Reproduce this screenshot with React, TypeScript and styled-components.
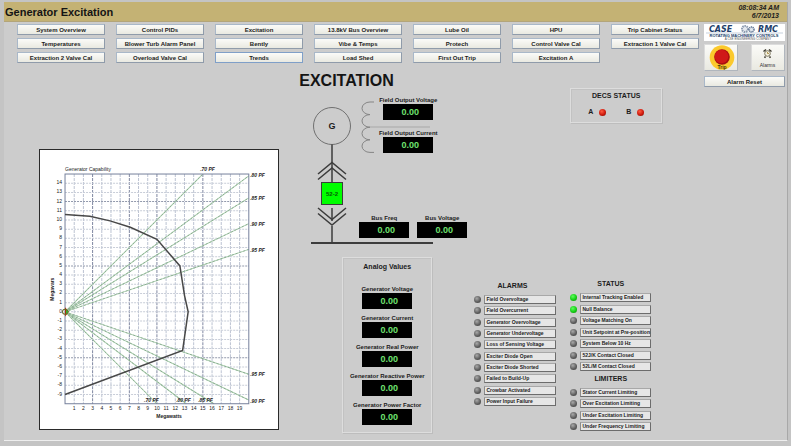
import React from "react";
import styled, { createGlobalStyle } from "styled-components";

const GlobalStyle = createGlobalStyle`
  *, *::before, *::after { box-sizing: border-box; }
  body {
    margin: 0;
    background: #cccccc;
    color: #1c1c1c;
    font-family: "Liberation Sans", Arial, sans-serif;
  }
  button { font-family: inherit; color: inherit; }
  h1, h2, h3, p, ul, dl, dd, output { margin: 0; padding: 0; }
`;

const Screen = styled.div`
  min-height: 100vh;
  padding: 2px 3px 4px 4px;
  background: #c4c4c4;
`;

const Frame = styled.div`
  background: #cccccc;
  border-right: 1px solid #a8a8a8;
  border-bottom: 1px solid #eeeeee;
`;

const Header = styled.header`
  display: flex;
  align-items: center;
  justify-content: space-between;
  height: 20px;
  padding: 0 8px 0 1px;
  background: #c4b274;
  border-bottom: 1px solid #b3a57a;
`;

const PageTitle = styled.h1`
  font-size: 11px;
  line-height: 18px;
  color: #141414;
`;

const Clock = styled.time`
  font-size: 7px;
  line-height: 8px;
  font-weight: bold;
  font-style: italic;
  text-align: right;
`;

const Body = styled.div`
  display: grid;
  grid-template-columns: minmax(0, 1fr) 81px;
  column-gap: 5px;
  padding: 2px 2px 0 0;
`;

const Nav = styled.nav`
  display: grid;
  grid-template-columns: repeat(7, minmax(0, 1fr));
  gap: 3px 11px;
  padding: 0 0 0 13px;
`;

const ButtonBase = styled.button`
  border: 1px solid #9aa3ad;
  border-top-color: #b4bfcc;
  border-radius: 0;
  background: linear-gradient(#fbfbf8, #e9e9e1);
  padding: 0;
  cursor: pointer;
`;

const NavButton = styled(ButtonBase)<{ $current?: boolean }>`
  height: 11px;
  font-size: 6px;
  line-height: 8px;
  font-weight: bold;
  white-space: nowrap;
  overflow: hidden;
  border-color: ${(p) => (p.$current ? "#7f9fc8" : "#a9b8c9 #8f9baa #8f9baa #a9b8c9")};
`;

const Aside = styled.aside`
  display: flex;
  flex-direction: column;
  gap: 3px;
`;

const Logo = styled.svg`
  display: block;
  width: 100%;
  height: 17px;
  background: #ffffff;
`;

const IconButtons = styled.div`
  display: flex;
  justify-content: space-between;
  padding-bottom: 2px;
`;

const IconButton = styled(ButtonBase)`
  width: 34px;
  height: 27px;
  border-color: #dcdcdc #b0b6bd #b0b6bd #dcdcdc;
  svg { display: block; width: 32px; height: 25px; }
`;

const Panels = styled.main`
  display: grid;
  grid-template-columns: 260fr 175fr 96fr 90fr;
  padding: 1px 37px 6px 35px;
`;

const ChartPanel = styled.figure`
  margin: 85px 20px 0 0;
  align-self: start;
  background: #ffffff;
  border: 1px solid #2a2a2a;
  svg { display: block; width: 100%; height: auto; }
`;

const Center = styled.section`
  display: flex;
  flex-direction: column;
  align-items: flex-start;
  padding-top: 8px;
`;

const MainTitle = styled.h2`
  font-size: 16px;
  line-height: 18px;
  color: #141414;
`;

const Diagram = styled.div`
  position: relative;
  width: 168px;
  height: 157px;
  margin-top: 6px;
  > svg { display: block; }
`;

const Readout = styled.div`
  display: flex;
  flex-direction: column;
  align-items: center;
`;

const DiagramNode = styled(Readout)<{ $x: number; $y: number }>`
  position: absolute;
  left: ${(p) => p.$x}px;
  top: ${(p) => p.$y}px;
  width: 50px;
`;

const ReadoutLabel = styled.label`
  font-size: 6px;
  line-height: 8px;
  font-weight: bold;
  white-space: nowrap;
`;

const ReadoutValue = styled.output`
  width: 50px;
  height: 16px;
  padding-left: 4px;
  background: #000000;
  color: #6fe070;
  font-size: 9px;
  line-height: 16px;
  font-weight: bold;
  text-align: center;
`;

const Grooved = styled.section`
  border: 1px solid #dddddd;
  box-shadow: inset 1px 1px 0 #c2c2c2, 1px 1px 0 #bdbdbd;
`;

const AnalogPanel = styled(Grooved)`
  display: flex;
  flex-direction: column;
  align-items: center;
  gap: 5px;
  width: 90px;
  margin: 4px 0 0 43px;
  padding: 4px 0 7px;
`;

const GroupTitle = styled.h3`
  font-size: 7px;
  line-height: 10px;
  text-align: center;
`;

const AnalogTitle = styled(GroupTitle)`
  margin-bottom: 8px;
`;

const AlarmTitle = styled(GroupTitle)`
  padding-right: 6px;
`;

const AlarmColumn = styled.section`
  padding: 217px 14px 0 0;
`;

const StatusColumn = styled.div`
  padding-top: 24px;
`;

const DecsPanel = styled(Grooved)`
  height: 35px;
  padding-top: 2px;
`;

const DecsLights = styled.div`
  display: flex;
  justify-content: center;
  gap: 20px;
  padding-top: 6px;
`;

const DecsLight = styled.div`
  display: flex;
  align-items: center;
  gap: 6px;
  font-size: 7px;
  line-height: 10px;
  font-weight: bold;
`;

const lampColors = {
  off: "radial-gradient(circle at 40% 35%, #a8a8a8, #5a5a5a 60%, #3c3c3c)",
  green: "radial-gradient(circle at 40% 35%, #5cff5c, #10c810 60%, #0a7a0a)",
  red: "radial-gradient(circle at 40% 35%, #ff5a40, #c81408 60%, #5c1408)",
};
type LampState = keyof typeof lampColors;

const Lamp = styled.span<{ $state: LampState }>`
  flex: none;
  width: 7px;
  height: 7px;
  border-radius: 50%;
  background: ${(p) => lampColors[p.$state]};
`;

const StatusGroup = styled.section`
  padding: 156px 11px 0 0;
`;

const List = styled.ul<{ $height: number }>`
  display: flex;
  flex-direction: column;
  justify-content: space-between;
  min-height: ${(p) => p.$height}px;
  list-style: none;
`;

const AlarmList = styled(List)`
  margin-top: 4px;
`;

const StatusList = styled(List)`
  margin: 4px 0 3px;
`;

const Item = styled.li`
  display: flex;
  align-items: center;
  gap: 3px;
`;

const ItemText = styled.span`
  flex: 1;
  min-width: 0;
  height: 9px;
  padding-left: 1px;
  border: 1px solid #8c8c8c;
  border-color: #a8a8a8 #6c6c6c #6c6c6c #8c8c8c;
  background: #e6e6e6;
  font-size: 5px;
  line-height: 7px;
  font-weight: bold;
  white-space: nowrap;
`;

const navItems = [
  "System Overview", "Control PIDs", "Excitation", "13.8kV Bus Overview", "Lube Oil", "HPU", "Trip Cabinet Status",
  "Temperatures", "Blower Turb Alarm Panel", "Bently", "Vibe & Temps", "Protech", "Control Valve Cal", "Extraction 1 Valve Cal",
  "Extraction 2 Valve Cal", "Overload Valve Cal", "Trends", "Load Shed", "First Out Trip", "Excitation A",
];

const alarms = [
  "Field Overvoltage", "Field Overcurrent", "Generator Overvoltage", "Generator Undervoltage", "Loss of Sensing Voltage",
  "Exciter Diode Open", "Exciter Diode Shorted", "Failed to Build-Up", "Crowbar Activated", "Power Input Failure",
];

const statuses: [string, LampState][] = [
  ["Internal Tracking Enabled", "green"],
  ["Null Balance", "green"],
  ["Voltage Matching On", "off"],
  ["Unit Setpoint at Pre-position", "off"],
  ["System Below 10 Hz", "off"],
  ["52J/K Contact Closed", "off"],
  ["52L/M Contact Closed", "off"],
];

const limiters = [
  "Stator Current Limiting", "Over Excitation Limiting", "Under Excitation Limiting", "Under Frequency Limiting",
];

const analogs = [
  "Generator Voltage", "Generator Current", "Generator Real Power", "Generator Reactive Power", "Generator Power Factor",
];

const fieldReadouts = [
  { label: "Field Output Voltage", x: 84, y: 0 },
  { label: "Field Output Current", x: 84, y: 33 },
  { label: "Bus Freq", x: 60, y: 118 },
  { label: "Bus Voltage", x: 118, y: 118 },
];

const idOf = (label: string) => label.toLowerCase().replace(/\W+/g, "-");

const PLOT = { left: 25, top: 24, unit: 9.18 };
const px = (v: number) => PLOT.left + v * PLOT.unit;
const py = (v: number) => PLOT.top + (15 - v) * PLOT.unit;

const pfLines: [number, number][] = [
  [15, 15], [20, 14.8], [20, 12.4], [20, 9.6], [20, 6.8],
  [20, -6.8], [20, -9.6], [16.2, -10], [13.2, -10], [10, -10],
];

const pfLabels = [
  { text: ".70 PF", x: 160, y: 21 },
  { text: ".80 PF", x: 210, y: 27 },
  { text: ".85 PF", x: 210, y: 50 },
  { text: ".90 PF", x: 210, y: 76 },
  { text: ".95 PF", x: 210, y: 102 },
  { text: ".95 PF", x: 210, y: 226 },
  { text: ".90 PF", x: 210, y: 253 },
  { text: ".70 PF", x: 104, y: 252 },
  { text: ".80 PF", x: 136, y: 252 },
  { text: ".85 PF", x: 158, y: 252 },
];

const capability: [number, number][] = [
  [0, 10.6], [2.7, 10.4], [4.9, 9.9], [7.1, 9.2], [10, 7.9], [12.5, 5], [13, 1.8], [13.4, 0], [13.2, -1.4], [12.8, -4.2], [0, -9],
];

const range = (from: number, to: number) => Array.from({ length: to - from + 1 }, (_, i) => from + i);

function CapabilityChart() {
  const font = '"Liberation Sans", Arial, sans-serif';
  return (
    <svg viewBox="0 0 238 279" fontFamily={font} fontSize="5" fill="#222" role="img" aria-label="Generator Capability">
      <g fill="none" strokeWidth="1">
        {range(1, 19).map((v) => (
          <line key={`x${v}`} x1={px(v)} x2={px(v)} y1={py(15)} y2={py(-10)} stroke={[3, 7, 10, 15].includes(v) ? "#8088a2" : "#bcc3d2"} strokeDasharray="3 1" />
        ))}
        {range(-9, 14).map((v) => (
          <line key={`y${v}`} x1={px(0)} x2={px(20)} y1={py(v)} y2={py(v)} stroke={v === 12 || v === -5 || v === 5 ? "#9299ac" : "#c8cdd8"} strokeDasharray="2 1" />
        ))}
        {pfLines.map(([x, y]) => (
          <g key={`${x}/${y}`}>
            <line x1={px(0)} y1={py(0)} x2={px(x)} y2={py(y)} stroke="#a9cdac" />
            <line x1={px(0)} y1={py(0)} x2={px(x)} y2={py(y)} stroke="#6f9478" strokeWidth="0.6" strokeDasharray="2 2" />
          </g>
        ))}
        <rect x={px(0)} y={py(15)} width={20 * PLOT.unit} height={25 * PLOT.unit} stroke="#76809c" />
        <polyline points={capability.map(([x, y]) => `${px(x)},${py(y)}`).join(" ")} stroke="#484848" strokeWidth="1.5" />
      </g>
      <path d="M25 157 l4 4.700 -4 4.700z" fill="#b02a10" />
      <circle cx="25" cy="161.700" r="2.500" fill="none" stroke="#6b6a20" />
      <path d="M26 159.500 l3 2.200 -3 2.200z" fill="#3aa830" />
      {range(1, 19).map((v) => (
        <text key={`tx${v}`} x={px(v)} y="260" textAnchor="middle">{v}</text>
      ))}
      {range(-9, 14).map((v) => (
        <text key={`ty${v}`} x="22" y={py(v) + 1} textAnchor="end">{v}</text>
      ))}
      <text x="25" y="21">Generator Capability</text>
      <text x="129" y="268" textAnchor="middle" fontWeight="bold">Megawatts</text>
      <text transform="translate(14 139) rotate(-90)" textAnchor="middle" fontWeight="bold">Megavars</text>
      <g fontWeight="bold" fontStyle="italic">
        {pfLabels.map((l) => <text key={`${l.x}-${l.y}`} x={l.x} y={l.y}>{l.text}</text>)}
      </g>
    </svg>
  );
}

function OneLineDrawing() {
  return (
    <svg width="168" height="157" viewBox="0 0 168 157" fill="none" stroke="#3c3c3c" aria-hidden="true">
      <circle cx="33" cy="30" r="18.500" stroke="#707070" />
      <path d="M75 6 h-4 a8 6.300 0 0 0 0 12.600 a8 6.300 0 0 0 0 12.600 a8 6.300 0 0 0 0 12.600 a8 6.300 0 0 0 0 12.600 h4" stroke="#858585" />
      <path d="M71 31 H131" stroke="#a8a8a8" />
      <path d="M33 48.500 V87 M33 112 V125 M33 130 V147" strokeWidth="1.500" />
      <path d="M19 78 L33 66.500 L47 78 M19 83.500 L33 72 L47 83.500 M19 112 L33 123.500 L47 112 M19 117.500 L33 129 L47 117.500" strokeWidth="1.500" />
      <rect x="22.500" y="86.500" width="21" height="22" fill="#00ff00" />
      <path d="M12 147 H134" strokeWidth="2" />
      <g fill="#1c1c1c" stroke="none" textAnchor="middle" fontWeight="bold" fontFamily='"Liberation Sans", Arial, sans-serif'>
        <text x="33" y="33" fontSize="9">G</text>
        <text x="33" y="100" fontSize="6" fill="#075c07">52-2</text>
      </g>
    </svg>
  );
}

function CompanyLogo() {
  return (
    <Logo viewBox="0 0 81 17" role="img" aria-label="CASE RMC" fill="#233f6b">
      <g fontFamily='"DejaVu Sans", sans-serif' fontWeight="bold" fontStyle="italic" fontSize="8">
        <text x="5" y="8">CASE</text>
        <text x="54" y="8">RMC</text>
      </g>
      <circle cx="41" cy="5" r="3" fill="#e4e8ee" stroke="#8c9bb0" strokeWidth="2" strokeDasharray="1.500 0.700" />
      <circle cx="47.500" cy="5.500" r="2.500" fill="#dfe5ec" stroke="#5f7492" strokeWidth="1.500" strokeDasharray="1.200 0.600" />
      <path d="M2 9 H79" stroke="#8fa0b8" strokeWidth="0.500" />
      <g fontFamily='"Liberation Sans", Arial, sans-serif' textAnchor="middle">
        <text x="40" y="12.700" fontSize="4" fontWeight="bold">ROTATING MACHINERY CONTROLS</text>
        <text x="44" y="16" fontSize="3" fill="#555">A CSE ENGINEERING COMPANY</text>
      </g>
    </Logo>
  );
}

function TripIcon() {
  return (
    <svg viewBox="0 0 32 25" aria-hidden="true">
      <circle cx="17" cy="12.500" r="12.300" fill="#fbc92c" />
      <circle cx="17" cy="12" r="7.800" fill="#a80f10" />
      <circle cx="16.500" cy="11.500" r="6.800" fill="#d01818" />
      <text x="17" y="24" fontSize="5" fontWeight="bold" textAnchor="middle" fill="#4a3208">Trip</text>
    </svg>
  );
}

function AlarmsIcon() {
  return (
    <svg viewBox="0 0 32 25" aria-hidden="true">
      <circle cx="15.500" cy="8.500" r="2.800" fill="#f4f0dc" stroke="#7a755c" />
      <path d="M11.500 6.500 l2.500-2 M17 4.500 l2.500 2 M13.500 11.500 l-1 1.300 M17.500 11.500 l1 1.300" stroke="#3a372c" strokeWidth="1.500" />
      <path d="M15.500 7 V8.500 H17" fill="none" stroke="#a08030" strokeWidth="0.800" />
      <text x="15.500" y="22" fontSize="5" textAnchor="middle" fill="#333">Alarms</text>
    </svg>
  );
}

function LampItem({ text, state = "off" }: { text: string; state?: LampState }) {
  return (
    <Item>
      <Lamp $state={state} />
      <ItemText>{text}</ItemText>
    </Item>
  );
}

export default function App() {
  return (
    <>
      <GlobalStyle />
      <Screen>
        <Frame>
          <Header>
            <PageTitle>Generator Excitation</PageTitle>
            <Clock dateTime="2013-06-07T08:08:34">08:08:34 AM<br />6/7/2013</Clock>
          </Header>
          <Body>
            <div>
              <Nav>
                {navItems.map((item) => (
                  <NavButton key={item} type="button" $current={item === "Trends"}>{item}</NavButton>
                ))}
              </Nav>
              <Panels>
                <ChartPanel><CapabilityChart /></ChartPanel>
                <Center>
                  <MainTitle>EXCITATION</MainTitle>
                  <Diagram>
                    <OneLineDrawing />
                    {fieldReadouts.map((r) => (
                      <DiagramNode key={r.label} $x={r.x} $y={r.y}>
                        <ReadoutLabel htmlFor={idOf(r.label)}>{r.label}</ReadoutLabel>
                        <ReadoutValue id={idOf(r.label)}>0.00</ReadoutValue>
                      </DiagramNode>
                    ))}
                  </Diagram>
                  <AnalogPanel>
                    <AnalogTitle>Analog Values</AnalogTitle>
                    {analogs.map((label) => (
                      <Readout key={label}>
                        <ReadoutLabel htmlFor={idOf(label)}>{label}</ReadoutLabel>
                        <ReadoutValue id={idOf(label)}>0.00</ReadoutValue>
                      </Readout>
                    ))}
                  </AnalogPanel>
                </Center>
                <AlarmColumn>
                  <AlarmTitle>ALARMS</AlarmTitle>
                  <AlarmList $height={111}>
                    {alarms.map((text) => <LampItem key={text} text={text} />)}
                  </AlarmList>
                </AlarmColumn>
                <StatusColumn>
                  <DecsPanel>
                    <GroupTitle>DECS STATUS</GroupTitle>
                    <DecsLights>
                      <DecsLight>A <Lamp $state="red" /></DecsLight>
                      <DecsLight>B <Lamp $state="red" /></DecsLight>
                    </DecsLights>
                  </DecsPanel>
                  <StatusGroup>
                    <GroupTitle>STATUS</GroupTitle>
                    <StatusList $height={78}>
                      {statuses.map(([text, state]) => <LampItem key={text} text={text} state={state} />)}
                    </StatusList>
                    <GroupTitle>LIMITERS</GroupTitle>
                    <StatusList $height={43}>
                      {limiters.map((text) => <LampItem key={text} text={text} />)}
                    </StatusList>
                  </StatusGroup>
                </StatusColumn>
              </Panels>
            </div>
            <Aside>
              <CompanyLogo />
              <IconButtons>
                <IconButton type="button" aria-label="Trip"><TripIcon /></IconButton>
                <IconButton type="button" aria-label="Alarms"><AlarmsIcon /></IconButton>
              </IconButtons>
              <NavButton type="button">Alarm Reset</NavButton>
            </Aside>
          </Body>
        </Frame>
      </Screen>
    </>
  );
}
